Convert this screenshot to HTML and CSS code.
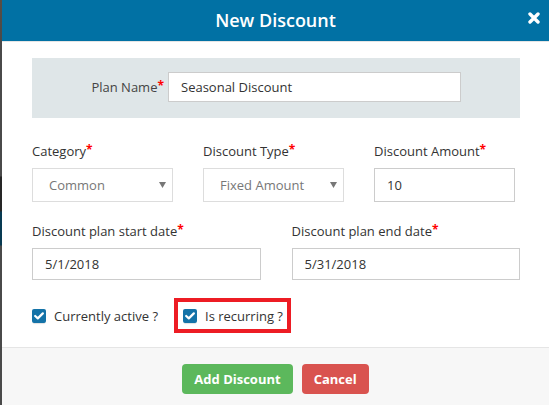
FILE: index.html
```html
<!DOCTYPE html>
<html lang="en">
<head>
<meta charset="utf-8">
<title>New Discount</title>
<link rel="stylesheet" href="styles.css">
</head>
<body>
<div class="modal">
  <header class="modal-header">
    <span class="spacer"></span>
    <h1 class="modal-title">New Discount</h1>
    <button class="close" aria-label="Close">
      <svg width="12" height="12" viewBox="0 0 12 12"><path d="M2 2 L10 10 M10 2 L2 10" stroke="#fff" stroke-width="3.4" stroke-linecap="round"/></svg>
    </button>
  </header>

  <div class="modal-body">
    <div class="plan-panel">
      <label class="plan-label">Plan Name<span class="req">*</span></label>
      <div class="input plan-input">Seasonal Discount</div>
    </div>

    <div class="row3">
      <div class="field">
        <label class="label">Category<span class="req">*</span></label>
        <div class="select"><span>Common</span><svg class="caret" width="7" height="6" viewBox="0 0 7 6"><path d="M0 0 H7 L3.5 6 Z" fill="#777"/></svg></div>
      </div>
      <div class="field">
        <label class="label">Discount Type<span class="req">*</span></label>
        <div class="select"><span>Fixed Amount</span><svg class="caret" width="7" height="6" viewBox="0 0 7 6"><path d="M0 0 H7 L3.5 6 Z" fill="#777"/></svg></div>
      </div>
      <div class="field">
        <label class="label">Discount Amount<span class="req">*</span></label>
        <div class="input">10</div>
      </div>
    </div>

    <div class="row2">
      <div class="field">
        <label class="label">Discount plan start date<span class="req">*</span></label>
        <div class="input">5/1/2018</div>
      </div>
      <div class="field">
        <label class="label">Discount plan end date<span class="req">*</span></label>
        <div class="input">5/31/2018</div>
      </div>
    </div>

    <div class="checks">
      <label class="check">
        <span class="box"><svg width="10" height="8" viewBox="0 0 10 8"><path d="M1.2 4 L3.8 6.4 L8.8 1.4" fill="none" stroke="#fff" stroke-width="2.2" stroke-linecap="round" stroke-linejoin="round"/></svg></span>
        <span class="check-text">Currently active ?</span>
      </label>
      <div class="highlight">
        <label class="check">
          <span class="box"><svg width="10" height="8" viewBox="0 0 10 8"><path d="M1.2 4 L3.8 6.4 L8.8 1.4" fill="none" stroke="#fff" stroke-width="2.2" stroke-linecap="round" stroke-linejoin="round"/></svg></span>
          <span class="check-text">Is recurring ?</span>
        </label>
      </div>
    </div>
  </div>

  <footer class="modal-footer">
    <button class="btn btn-success">Add Discount</button>
    <button class="btn btn-danger">Cancel</button>
  </footer>
</div>
</body>
</html>
```

FILE: styles.css
```css
* { box-sizing: border-box; }

html, body {
  margin: 0;
  height: 100%;
}

body {
  font-family: "Open Sans", "Liberation Sans", sans-serif;
  font-size: 13px;
  color: #333;
  background: linear-gradient(to bottom,
    #5a4d42 0, #4a4a4a 40px,
    #4a4a4a 176px, #262626 177px, #262626 211px,
    #083a52 212px, #083a52 245px,
    #4a4a4a 246px, #4a4a4a 100%);
  overflow: hidden;
}

.modal {
  margin-left: 2px;
  height: 100%;
  background: #fff;
  display: flex;
  flex-direction: column;
}

.modal-header {
  height: 42px;
  background: #0171a4;
  border-bottom: 1px solid #e5e5e5;
  display: grid;
  grid-template-columns: 1fr auto 1fr;
  align-items: center;
}

.modal-title {
  margin: 0;
  color: #fff;
  font-size: 18px;
  font-weight: 600;
  line-height: 1;
  padding-bottom: 1px;
}

.close {
  justify-self: end;
  margin-right: 8px;
  margin-bottom: 6px;
  background: none;
  border: 0;
  padding: 0;
  width: 15px;
  height: 15px;
  display: flex;
  align-items: center;
  justify-content: center;
}

.modal-body {
  padding: 16px 29px 14px 30px;
}

.plan-panel {
  background: #dfe6e8;
  height: 60px;
  padding-top: 14px;
  display: flex;
  align-items: flex-start;
}

.plan-label {
  width: 136px;
  text-align: right;
  line-height: 30px;
  color: #444;
  padding-right: 4px;
}

.req {
  color: #f00;
  font-weight: 700;
  font-size: 12px;
  line-height: 0;
  vertical-align: 2px;
}

.input, .select {
  height: 32px;
  border: 1px solid #ccc;
  background: #fff;
  padding: 0 12px;
  display: flex;
  align-items: center;
  color: #333;
}

.plan-input {
  width: 293px;
  height: 30px;
}

.row3 {
  margin-top: 24px;
  display: grid;
  grid-template-columns: 141px 141px 141px;
  column-gap: 30px;
}

.row2 {
  margin-top: 20px;
  display: grid;
  grid-template-columns: 1fr 1fr;
  column-gap: 31px;
}

.field {
  display: flex;
  flex-direction: column;
}

.label {
  line-height: 18px;
  height: 18px;
  margin-bottom: 8px;
}

.row3 .input, .row3 .select {
  height: 34px;
}

.select {
  border-color: #ddd;
  color: #777;
  padding: 0 6px 0 16px;
  justify-content: space-between;
}

.caret {
  display: block;
}

.checks {
  margin-top: 18px;
  display: flex;
  align-items: center;
}

.check {
  display: flex;
  align-items: center;
  gap: 8px;
}

.box {
  width: 14px;
  height: 14px;
  border-radius: 2px;
  background: #1473a8;
  display: flex;
  align-items: center;
  justify-content: center;
  box-shadow: 0 2px 1px -1px rgba(0, 0, 0, 0.12);
}

.check-text {
  line-height: 18px;
}

.highlight {
  margin-left: 16px;
  border: 4px solid #ed1c24;
  height: 35px;
  padding: 0 4px 0 5px;
  display: flex;
  align-items: center;
}

.modal-footer {
  flex: 1;
  background: #f7f7f7;
  border-top: 1px solid #e5e5e5;
  padding-top: 16px;
  display: flex;
  justify-content: center;
  align-items: flex-start;
  gap: 9px;
}

.btn {
  height: 30px;
  padding: 0 12px;
  border: 0;
  border-radius: 4px;
  color: #fff;
  font-family: "Open Sans", "Liberation Sans", sans-serif;
  font-size: 13px;
  font-weight: 700;
}

.btn-success { background: #5cb85c; }
.btn-danger { background: #d9534f; }
```
